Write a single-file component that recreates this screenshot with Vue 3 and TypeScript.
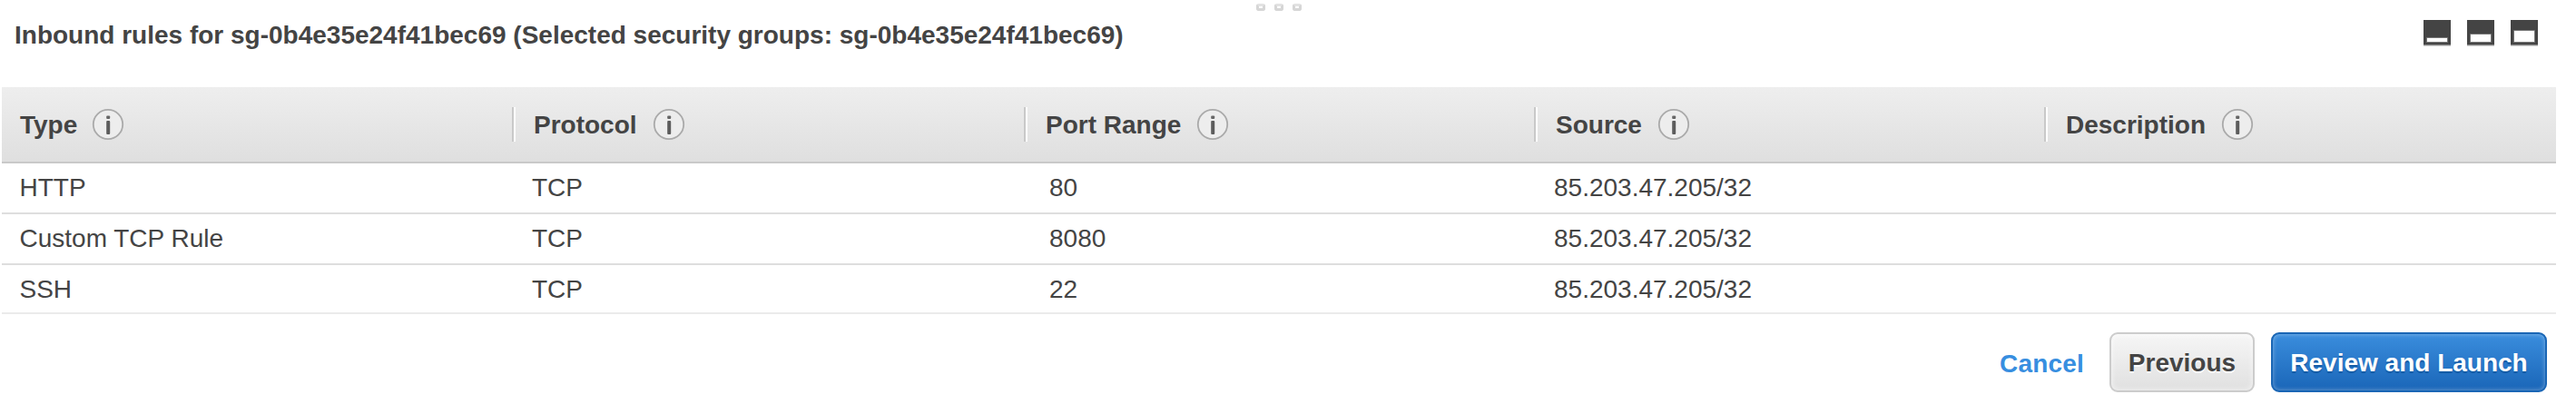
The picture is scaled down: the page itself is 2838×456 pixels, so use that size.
<script setup lang="ts">
interface Column {
  key: string
  label: string
}

interface Rule {
  type: string
  protocol: string
  port: string
  source: string
}

const groupId = 'sg-0b4e35e24f41bec69'

const columns: Column[] = [
  { key: 'type', label: 'Type' },
  { key: 'protocol', label: 'Protocol' },
  { key: 'port', label: 'Port Range' },
  { key: 'source', label: 'Source' },
  { key: 'description', label: 'Description' },
]

const rules: Rule[] = [
  { type: 'HTTP', protocol: 'TCP', port: '80', source: '85.203.47.205/32' },
  { type: 'Custom TCP Rule', protocol: 'TCP', port: '8080', source: '85.203.47.205/32' },
  { type: 'SSH', protocol: 'TCP', port: '22', source: '85.203.47.205/32' },
]

// Top edge of the white pane in each panel-size icon
const paneSizes = [20, 16, 12]
</script>

<template>
  <div class="panel">
    <div class="grip"><i v-for="n in 3" :key="n"></i></div>
    <header class="top">
      <h2 class="title">Inbound rules for {{ groupId }} (Selected security groups: {{ groupId }})</h2>
      <div class="sizes">
        <svg v-for="y in paneSizes" :key="y" width="30" height="29" viewBox="0 0 30 29">
          <rect width="30" height="27" fill="#444" />
          <rect y="27" width="30" height="1" fill="#888" />
          <rect y="28" width="30" height="1" fill="#ccc" />
          <rect x="3.5" :y="y - 0.5" width="23" :height="25 - y" rx="0.5" fill="#fff" stroke="#777" />
        </svg>
      </div>
    </header>

    <div class="grid head">
      <div v-for="c in columns" :key="c.key" class="hcell">
        <span>{{ c.label }}</span>
        <svg class="info" width="36" height="36" viewBox="0 0 36 36">
          <circle cx="18" cy="18" r="16.2" fill="#ededed" stroke="#aaa" stroke-width="1.8" />
          <rect x="16.2" y="8.6" width="4" height="3.4" rx="1" fill="#666" />
          <rect x="16.2" y="14" width="4" height="15" rx="1" fill="#5c5c5c" />
        </svg>
      </div>
    </div>

    <div v-for="r in rules" :key="r.type" class="grid row">
      <div class="cell">{{ r.type }}</div>
      <div class="cell">{{ r.protocol }}</div>
      <div class="cell port">{{ r.port }}</div>
      <div class="cell">{{ r.source }}</div>
      <div class="cell"></div>
    </div>

    <footer class="actions">
      <a class="cancel">Cancel</a>
      <button class="btn prev" type="button">Previous</button>
      <button class="btn launch" type="button">Review and Launch</button>
    </footer>
  </div>
</template>

<style>
body {
  background: #fff;
}
</style>

<style scoped>
.panel {
  box-sizing: border-box;
  width: 2838px;
  height: 456px;
  overflow: hidden;
  padding-left: 2px;
  background: #fff;
  color: #444;
  font-family: "Liberation Sans", Arial, sans-serif;
  font-size: 28px;
  line-height: 32px;
  white-space: nowrap;
}
.grip {
  display: flex;
  gap: 10px;
  height: 12px;
  box-sizing: border-box;
  padding: 4px 0 0 1382px;
}
.grip i {
  box-sizing: border-box;
  width: 10px;
  height: 8px;
  border: 3px solid #d6d6d6;
  border-top-color: #e2e2e2;
  border-radius: 3px;
}
.top {
  display: flex;
  justify-content: space-between;
  height: 84px;
  box-sizing: border-box;
  padding: 10px 42px 0 14px;
}
.title {
  margin: 1px 0 0;
  font-size: 28px;
}
.sizes {
  display: flex;
  gap: 18px;
}
.grid {
  display: grid;
  grid-template-columns: 566px 564px 562px 562px 560px;
  width: 2814px;
  box-sizing: border-box;
}
.head {
  height: 84px;
  border-bottom: 2px solid #c9c9c9;
  background: linear-gradient(#eee, #dfdfdf);
  font-weight: bold;
}
.hcell {
  display: flex;
  align-items: center;
  height: 38px;
  margin-top: 22px;
  padding-left: 20px;
  border-right: 2px solid #fff;
  box-shadow: inset -2px 0 #c9c9c9;
}
.hcell:last-child {
  border-right: 0;
  box-shadow: none;
}
.hcell span {
  padding-top: 2px;
}
.info {
  margin-left: 17px;
}
.hcell:first-child .info {
  margin-left: 15.5px;
}
.row {
  height: 56px;
  border-bottom: 2px solid #dedede;
}
.row:nth-last-child(2) {
  height: 54px;
  border-bottom-color: #ebebeb;
}
.cell {
  padding: 11px 0 0 18px;
}
.cell:first-child {
  padding-left: 19.5px;
}
.cell.port {
  padding-left: 24px;
}
.actions {
  display: flex;
  justify-content: flex-end;
  padding: 20px 32px 0 0;
  font-weight: bold;
}
.cancel {
  padding-top: 19px;
  margin-right: 28px;
  color: #378ee0;
  letter-spacing: 0.2px;
}
.btn {
  box-sizing: border-box;
  height: 66px;
  padding: 2px 0 0;
  border: 2px solid #ccc;
  border-radius: 9px;
  font: bold 28px/32px "Liberation Sans", Arial, sans-serif;
}
.prev {
  width: 160px;
  margin-right: 18px;
  color: #444;
  background: linear-gradient(#f6f6f6, #e0e0e0);
  box-shadow: inset 0 0 6px rgba(255, 255, 255, 0.7);
  text-shadow: 0 2px 0 #fff;
}
.launch {
  width: 304px;
  border-color: #1a66b5;
  color: #fff;
  background: linear-gradient(#3a8ddd, #1a66b8);
  box-shadow: inset 0 0 5px rgba(255, 255, 255, 0.4);
  text-shadow: 0 2px 1px #145ba5;
}
</style>
